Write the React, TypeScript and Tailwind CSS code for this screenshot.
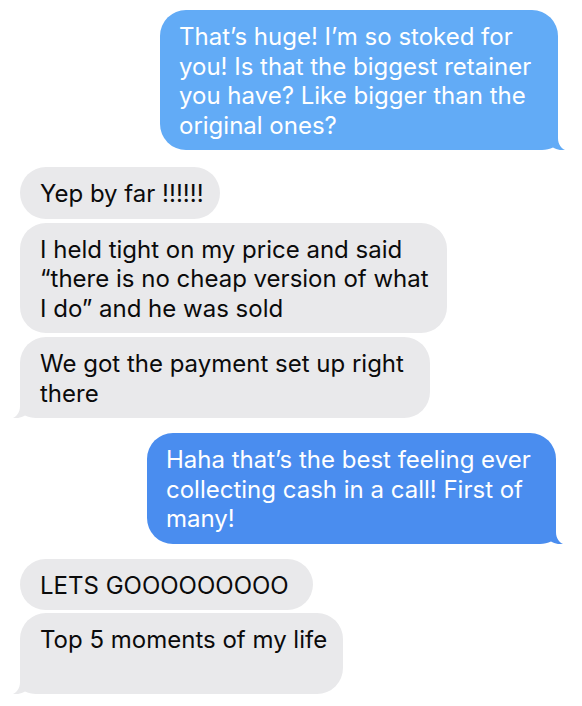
import React from "react";

type Side = "left" | "right";

const TAIL_PATH =
  "M0 0H26V14C26 20 29 24 33 26C29 26.6 24 25.6 21 23.6C18 25.3 14 26 10 26H0Z";

function Tail({ side, fillClass }: { side: Side; fillClass: string }) {
  return (
    <svg
      width="34"
      height="26"
      viewBox="0 0 34 26"
      className={
        side === "right"
          ? "absolute bottom-0 right-[-8px]"
          : "absolute bottom-0 left-[-8px] -scale-x-100"
      }
    >
      <path d={TAIL_PATH} className={fillClass} />
    </svg>
  );
}

function Sent({
  lines,
  width,
  bg,
  fill,
  className = "",
}: {
  lines: string[];
  width: string;
  bg: string;
  fill: string;
  className?: string;
}) {
  return (
    <div className={`flex justify-end ${className}`}>
      <div className={`relative rounded-[26px] pl-[19px] pt-[12px] pb-[10px] text-white ${bg} ${width}`}>
        <Tail side="right" fillClass={fill} />
        <div className="relative">
          {lines.map((l, i) => (
            <div key={i} className="whitespace-nowrap">
              {l}
            </div>
          ))}
        </div>
      </div>
    </div>
  );
}

function Received({
  lines,
  width,
  tail = false,
  className = "",
}: {
  lines: string[];
  width: string;
  tail?: boolean;
  className?: string;
}) {
  return (
    <div className={`flex pl-5 ${className}`}>
      <div className={`relative rounded-[26px] bg-[#e9e9eb] pl-5 pt-[12px] pb-[10px] text-[#0b0b0b] ${width}`}>
        {tail && <Tail side="left" fillClass="fill-[#e9e9eb]" />}
        <div className="relative">
          {lines.map((l, i) => (
            <div key={i} className="min-h-[29.5px] whitespace-nowrap">
              {l}
            </div>
          ))}
        </div>
      </div>
    </div>
  );
}

export default function App() {
  return (
    <div className="h-[706px] w-[582px] overflow-hidden bg-white font-['Inter','Liberation_Sans',sans-serif] text-[24px] leading-[29.5px]">
      <Sent
        className="pt-[10px] pr-[24px]"
        width="w-[398px]"
        bg="bg-[#62abf6]"
        fill="fill-[#62abf6]"
        lines={[
          "That’s huge! I’m so stoked for",
          "you! Is that the biggest retainer",
          "you have? Like bigger than the",
          "original ones?",
        ]}
      />

      <div className="mt-[17px] flex flex-col gap-1">
        <Received width="w-[200px]" lines={["Yep by far !!!!!!"]} />
        <Received
          width="w-[427px]"
          lines={[
            "I held tight on my price and said",
            "“there is no cheap version of what",
            "I do” and he was sold",
          ]}
        />
        <Received
          width="w-[410px]"
          tail
          lines={["We got the payment set up right", "there"]}
        />
      </div>

      <Sent
        className="mt-[15px] pr-[26px]"
        width="w-[409px]"
        bg="bg-[#4a8def]"
        fill="fill-[#4a8def]"
        lines={[
          "Haha that’s the best feeling ever",
          "collecting cash in a call! First of",
          "many!",
        ]}
      />

      <div className="mt-[15px] flex flex-col gap-[3px]">
        <Received width="w-[293px]" lines={["LETS GOOOOOOOOO"]} />
        <Received width="w-[323px]" tail lines={["Top 5 moments of my life", ""]} />
      </div>
    </div>
  );
}
